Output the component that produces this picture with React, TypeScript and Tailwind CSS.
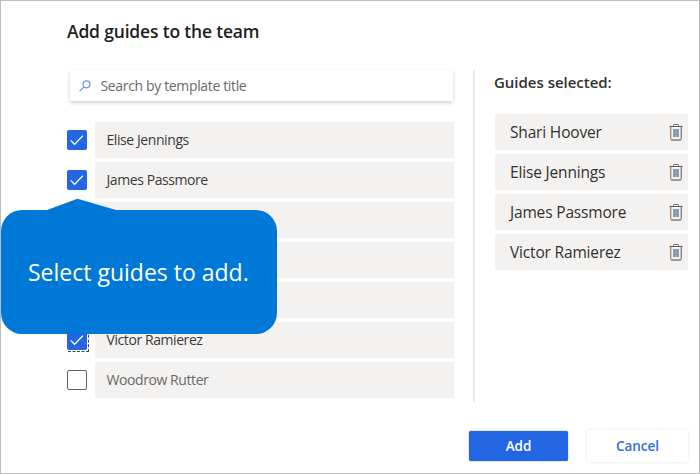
type Guide = { name: string; checked: boolean; focused?: boolean };

const guides: Guide[] = [
  { name: "Elise Jennings", checked: true },
  { name: "James Passmore", checked: true },
  { name: "", checked: false },
  { name: "", checked: false },
  { name: "", checked: false },
  { name: "Victor Ramierez", checked: true, focused: true },
  { name: "Woodrow Rutter", checked: false },
];

const selected = ["Shari Hoover", "Elise Jennings", "James Passmore", "Victor Ramierez"];

function Checkbox({ checked, focused }: { checked: boolean; focused?: boolean }) {
  if (!checked) {
    return <span className="size-5 shrink-0 rounded-[2px] border border-[#605e5c] bg-white" />;
  }
  return (
    <span className="relative size-5 shrink-0 rounded-[2px] bg-[#2266e3]">
      <svg viewBox="0 0 20 20" className="size-5" fill="none" stroke="#fff" strokeWidth="1.3">
        <path d="M3.6 10.4 7.6 14.3 16 5.6" />
      </svg>
      {focused && (
        <span className="absolute top-0 left-px h-[22px] w-[21px] border-r border-b border-dashed border-[#444]" />
      )}
    </span>
  );
}

function TrashIcon() {
  return (
    <svg viewBox="0 0 14 17" className="mt-px h-[17px] w-[14px] shrink-0" fill="none">
      <rect x="4" y="5" width="6" height="8" fill="#8fa9c4" />
      <path d="M5.5 5v8M8.5 5v8" stroke="#8a8f96" strokeWidth="1" />
      <path d="M0.5 2.5h13M4.5 2.500v-1.2q0-.8.8-.8h3.4q.8 0 .8.8v1.2" stroke="#605e5c" />
      <path d="M1.7 3v12.500" stroke="#b08f6c" strokeWidth="1.4" />
      <path d="M12.300 3v12.500" stroke="#8b857e" strokeWidth="1.4" />
      <path d="M2 16h10" stroke="#66625f" strokeWidth="1.2" />
    </svg>
  );
}

export default function App() {
  return (
    <div className="relative flex h-[474px] w-[700px] flex-col overflow-hidden border border-[#bdbdbd] bg-white font-['Open_Sans','Noto_Sans',sans-serif] text-[#323130]">
      <h1 className="mt-[18px] ml-[66px] h-6 text-[17.5px] leading-6 font-semibold tracking-[-0.18px] whitespace-nowrap text-[#201f1e]">
        Add guides to the team
      </h1>
      <div className="mt-[27px] flex h-[332px] pl-[66px]">
        <div className="w-[387px]">
          <div className="mr-px ml-[3px] flex h-[31px] items-center bg-white pl-[9px] shadow-[0_2px_4px_rgba(0,0,0,0.18)]">
            <svg viewBox="0 0 12 12" className="size-3" fill="none" stroke="#6f8fe8" strokeWidth="1.2">
              <circle cx="7.500" cy="4.300" r="3.500" />
              <path d="M5 6.800 .6 11.200" />
            </svg>
            <span className="ml-[9.5px] text-[14px] leading-5 tracking-[-0.35px] whitespace-nowrap text-[#6b6967]">
              Search by template title
            </span>
          </div>
          <ul className="mt-[21px] flex flex-col gap-1">
            {guides.map((g, i) => (
              <li key={i} className="flex h-9 items-center gap-2">
                <Checkbox checked={g.checked} focused={g.focused} />
                <span
                  className={`flex h-9 flex-1 items-center bg-[#f3f2f1] pb-[2px] pl-[11.5px] text-[14px] tracking-[-0.42px] ${
                    g.checked ? "text-[#3b3a39]" : "text-[#6b6967]"
                  }`}
                >
                  {g.name}
                </span>
              </li>
            ))}
          </ul>
        </div>
        <div className="ml-[19px] w-[2px] bg-[#eaeaea]" />
        <div className="ml-5 w-[193px]">
          <h2 className="mt-[2px] -ml-px h-5 text-[15px] leading-5 font-semibold tracking-[-0.02px] whitespace-nowrap text-[#323130]">
            Guides selected:
          </h2>
          <ul className="mt-[22px] flex flex-col gap-1">
            {selected.map((name) => (
              <li key={name} className="flex h-9 items-center justify-between bg-[#f3f2f1] pr-[5px] pl-[15px] text-[15.5px] tracking-[-0.17px]">
                <span className="pt-[2px]">{name}</span>
                <TrashIcon />
              </li>
            ))}
          </ul>
        </div>
      </div>
      <div className="mt-7 flex h-8 gap-[18px] pl-[467px] text-[13.5px] font-semibold">
        <button className="h-8 w-[101px] rounded-[2px] border border-[#e6eefc] bg-[#2266e3] bg-clip-padding pt-px text-white">Add</button>
        <button className="h-8 w-[101px] rounded-[2px] bg-white pt-px text-[#2f6bea] shadow-[0_0_3px_rgba(0,0,0,0.12)]">Cancel</button>
      </div>

      <div className="absolute top-[197px] left-0 w-[276px]">
        <svg viewBox="0 0 276 12" className="block h-3 w-[276px]" fill="#0078d7">
          <path d="M46 12 76.500 .8 115 12Z" />
        </svg>
        <div className="flex h-[124px] items-center rounded-[21px] bg-[#0078d7] pl-[27px] text-[23px] whitespace-nowrap text-white">
          Select guides to add.
        </div>
      </div>
    </div>
  );
}
